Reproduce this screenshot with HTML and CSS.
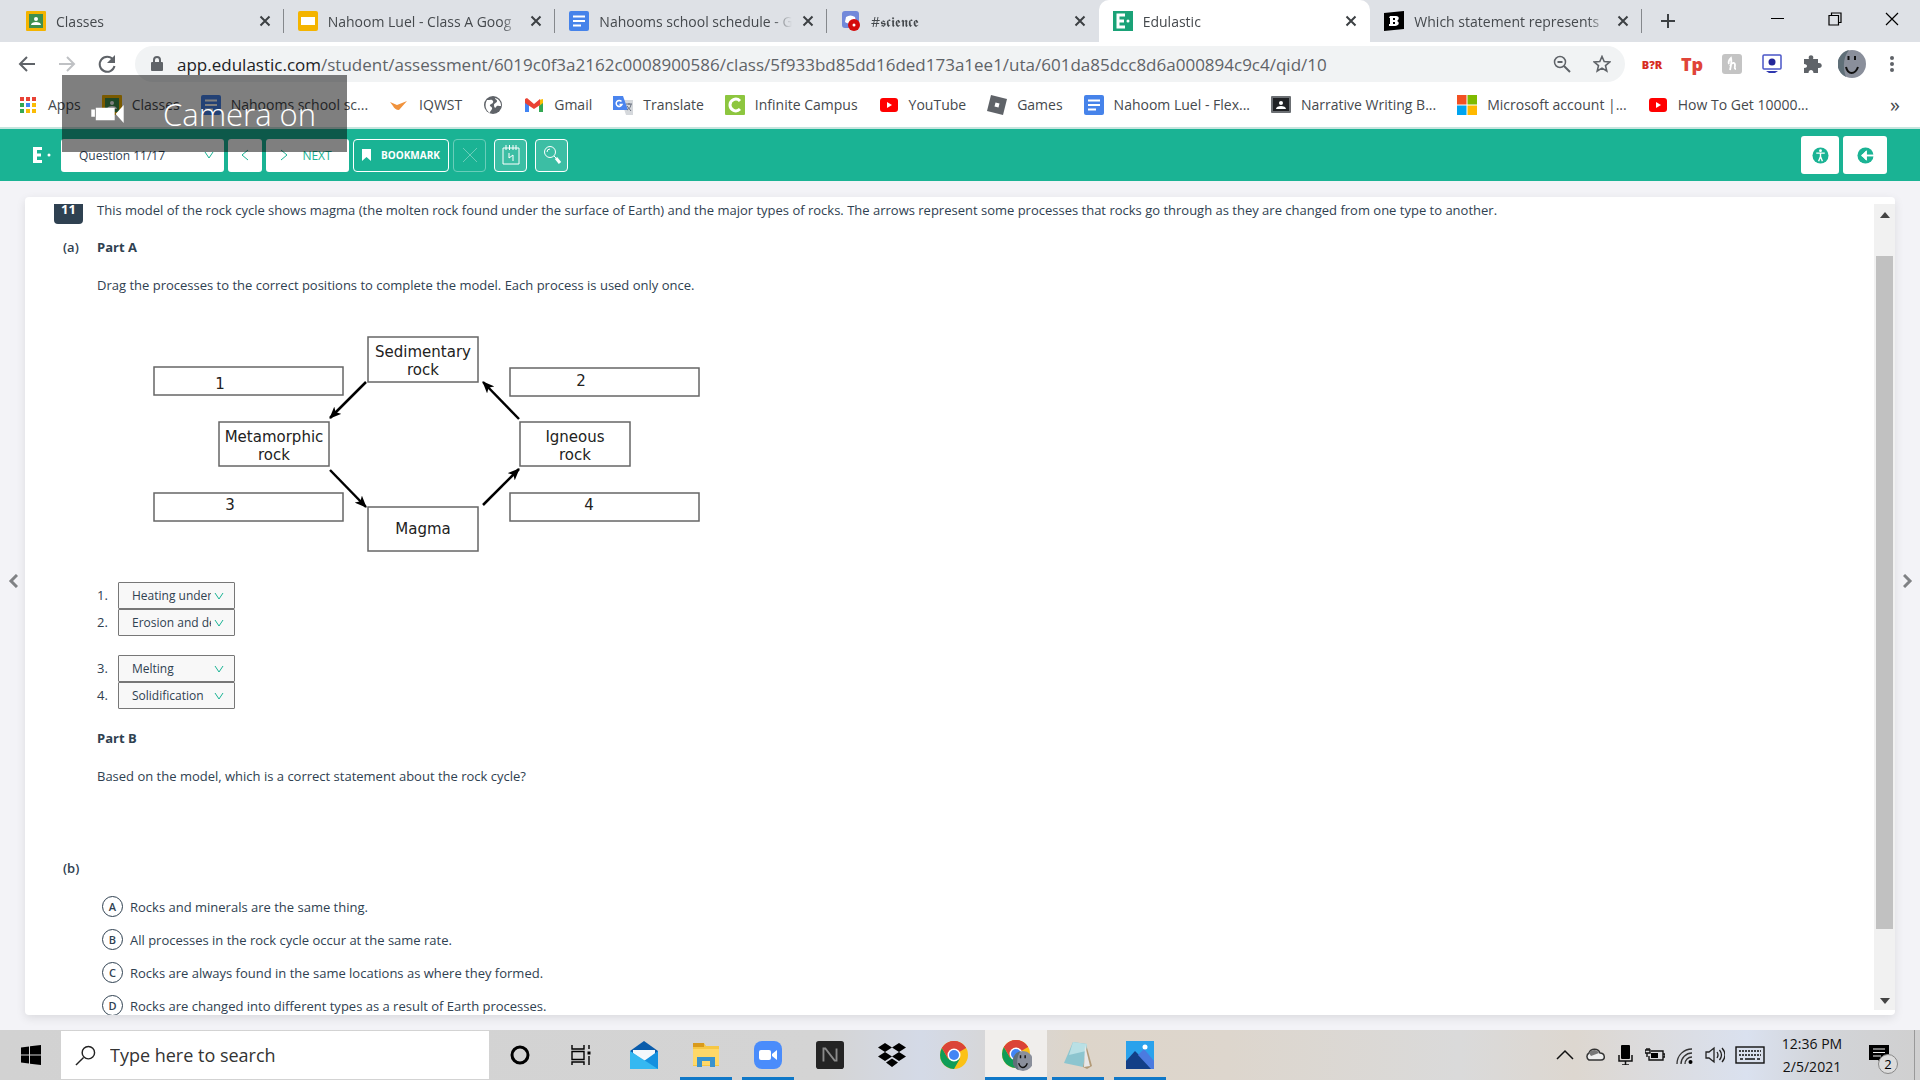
FILE: index.html
```html
<!DOCTYPE html>
<html lang="en">
<head>
  <meta charset="UTF-8" />
  <meta name="viewport" content="width=device-width, initial-scale=1" />
  <title>Edulastic</title>
  <link rel="stylesheet" href="styles.css">
</head>
<body>
  <!-- Shared icons -->
  <svg class="sprite" aria-hidden="true">
    <symbol id="i-class" viewBox="0 0 20 20"><rect width="20" height="20" rx="1" fill="#f4b400"/><rect x="3" y="3" width="14" height="14" fill="#3f8f4f"/><circle cx="10" cy="8" r="2" fill="#fff"/><path d="M5 14c0-4 10-4 10 0z" fill="#fff"/></symbol>
    <symbol id="i-doc" viewBox="0 0 20 20"><rect width="20" height="20" rx="2" fill="#4683ea"/><path d="M4 5.500h12M4 10h12M4 14.500h8" stroke="#fff" stroke-width="2"/></symbol>
    <symbol id="i-x" viewBox="0 0 12 12"><path d="M1.500 1.500l9 9M10.500 1.500l-9 9" stroke="#3c4043" stroke-width="2" fill="none"/></symbol>
    <symbol id="i-yt" viewBox="0 0 20 20"><rect x="1" y="3" width="18" height="14" rx="3" fill="#f00"/><path d="M8 7l5 3-5 3z" fill="#fff"/></symbol>
    <symbol id="i-chrome" viewBox="0 0 28 28"><circle cx="14" cy="14" r="14" fill="#fbc116"/><path d="M14 14L1.900 7A14 14 0 0 1 26.100 7z" fill="#db4437"/><path d="M1.900 7A14 14 0 0 0 14 28L20 17.500 8 17.500z" fill="#0f9d58"/><path d="M14 7h12.100A14 14 0 0 0 1.900 7L8 17.500z" fill="#db4437"/><circle cx="14" cy="14" r="6.500" fill="#fff"/><circle cx="14" cy="14" r="5" fill="#4285f4"/></symbol>
    <symbol id="i-face" viewBox="0 0 28 28"><circle cx="14" cy="14" r="14" fill="#8a8f9b"/><path d="M3 5a14 14 0 0 1 8-5C6 6 4 16 8 27A14 14 0 0 1 3 5z" fill="#5f6f78"/><path d="M10.500 6v4M17 6v4" stroke="#111" stroke-width="2"/><path d="M8 17c2 8 9 8 12 0" fill="none" stroke="#111" stroke-width="2"/></symbol>
  </svg>

  <div class="tabs">
    <div class="tab-list">
      <div class="tab">
        <svg class="fav"><use href="#i-class"/></svg>
        <span class="tab-title">Classes</span>
        <button class="tab-close" aria-label="Close"><svg><use href="#i-x"/></svg></button>
      </div>
      <div class="tab">
        <svg class="fav" viewBox="0 0 20 20"><rect width="20" height="20" rx="2" fill="#f4b400"/><rect x="3" y="6" width="14" height="8" fill="#fff"/></svg>
        <span class="tab-title">Nahoom Luel - Class A Goog</span>
        <button class="tab-close" aria-label="Close"><svg><use href="#i-x"/></svg></button>
      </div>
      <div class="tab">
        <svg class="fav"><use href="#i-doc"/></svg>
        <span class="tab-title">Nahooms school schedule - G</span>
        <button class="tab-close" aria-label="Close"><svg><use href="#i-x"/></svg></button>
      </div>
      <div class="tab no-line">
        <svg class="fav" viewBox="0 0 20 20"><rect x="1" width="17" height="17" rx="3" fill="#7289da"/><path d="M5 6c3-2 6-2 9 0l1 5c-3 2-8 2-11 0z" fill="#fff"/><circle cx="13" cy="14" r="6" fill="#d40b0b"/><circle cx="13" cy="14" r="1.500" fill="#fff"/></svg>
        <span class="tab-title">#𝖘𝖈𝖎𝖊𝖓𝖈𝖊</span>
        <button class="tab-close" aria-label="Close"><svg><use href="#i-x"/></svg></button>
      </div>
      <div class="tab active">
        <svg class="fav" viewBox="0 0 20 20"><rect width="20" height="20" fill="#1aa277"/><path d="M12 4H5v12h7M5 10h6" fill="none" stroke="#fff" stroke-width="3"/><circle cx="15" cy="10" r="1.500" fill="#fff"/></svg>
        <span class="tab-title">Edulastic</span>
        <button class="tab-close" aria-label="Close"><svg><use href="#i-x"/></svg></button>
      </div>
      <div class="tab">
        <svg class="fav" viewBox="0 0 20 20"><path d="M0 2L20 0v18L0 20z" fill="#000"/><path d="M6 5h6c4 0 3 4 1 5 3 1 2 5-2 5H5v-2h1V7H5z" fill="#fff"/><path d="M9 7h2v2H9zM9 11h2v2H9z" fill="#000"/></svg>
        <span class="tab-title">Which statement represents</span>
        <button class="tab-close" aria-label="Close"><svg><use href="#i-x"/></svg></button>
      </div>
    </div>
    <button class="new-tab" aria-label="New tab"><svg viewBox="0 0 16 16"><path d="M8 1v14M1 8h14" stroke="#3c4043" stroke-width="2"/></svg></button>
    <div class="window-buttons">
      <button aria-label="Minimize"><svg viewBox="0 0 14 14"><path d="M0 6.500h13" stroke="#000"/></svg></button>
      <button aria-label="Restore"><svg viewBox="0 0 14 14"><path d="M1 3.500h9.500V13H1zM3.500 3V1h9.500v9.500h-2" fill="none" stroke="#000" stroke-width="1.200"/></svg></button>
      <button aria-label="Close window"><svg viewBox="0 0 14 14"><path d="M1 1l12 12M13 1L1 13" stroke="#000" stroke-width="1.200"/></svg></button>
    </div>
  </div>

  <div class="toolbar">
    <button class="nav" aria-label="Back"><svg viewBox="0 0 20 20"><path d="M18 10H3M10 3l-7 7 7 7" fill="none" stroke="#5f6368" stroke-width="2"/></svg></button>
    <button class="nav" aria-label="Forward"><svg viewBox="0 0 20 20"><path d="M2 10h15M10 3l7 7-7 7" fill="none" stroke="#bfc1c4" stroke-width="2"/></svg></button>
    <button class="nav" aria-label="Reload"><svg viewBox="0 0 20 20"><path d="M16 5.500A7.500 7.500 0 1 0 17.500 12" fill="none" stroke="#5f6368" stroke-width="2"/><path d="M18 1v8h-8z" fill="#5f6368"/></svg></button>
    <div class="omnibox">
      <svg class="lock" viewBox="0 0 12 16"><rect y="6" width="12" height="9" rx="1" fill="#5f6368"/><path d="M3 7V4a3 3 0 0 1 6 0v3" fill="none" stroke="#5f6368" stroke-width="2"/></svg>
      <div class="url"><span>app.edulastic.com</span>/student/assessment/6019c0f3a2162c0008900586/class/5f933bd85dd16ded173a1ee1/uta/601da85dcc8d6a000894c9c4/qid/10</div>
      <button aria-label="Zoom"><svg viewBox="0 0 18 18"><circle cx="7" cy="7" r="5.500" fill="none" stroke="#5f6368" stroke-width="1.500"/><path d="M4.500 7h5M11 11l6 6" stroke="#5f6368" stroke-width="2"/></svg></button>
      <button aria-label="Bookmark this page"><svg viewBox="0 0 18 18"><path d="M9 1.500l2.200 5.100 5.500.4-4.200 3.600 1.300 5.400L9 13.100 4.200 16l1.300-5.400L1.300 7l5.500-.4z" fill="none" stroke="#5f6368" stroke-width="1.600"/></svg></button>
    </div>
    <div class="extensions">
      <button class="ext-bpr" aria-label="BPR">B?R</button>
      <button class="ext-tp" aria-label="TP">Tp</button>
      <button aria-label="Honey"><svg viewBox="0 0 20 20"><rect width="20" height="20" rx="3" fill="#c4c4c4"/><path d="M8 16c1-4 2-8 1-12-2 2-3 4-2 6M8 12c2-4 5-4 5-1 0 2-1 4 1 4" fill="none" stroke="#fff" stroke-width="1.800"/></svg></button>
      <button aria-label="Screen"><svg viewBox="0 0 20 20"><rect x="1" y="1" width="18" height="14" rx="1" fill="#fff" stroke="#4a55c8" stroke-width="1.500"/><circle cx="10" cy="8" r="3.500" fill="#23269a"/><path d="M4 17h12l-3 2H7z" fill="#3039b0"/></svg></button>
      <button aria-label="Extensions"><svg viewBox="0 0 20 20"><path d="M2 5h5C5 0 13 0 11 5h5v4c5-1 5 6 0 5v5h-4.500c0-4-5-4-5 0H2v-5c4 0 4-4 0-4z" fill="#5f6368"/></svg></button>
      <button class="avatar" aria-label="Profile"><svg><use href="#i-face"/></svg></button>
      <button class="menu" aria-label="Menu"><svg viewBox="0 0 6 18"><circle cx="3" cy="3" r="2"/><circle cx="3" cy="9" r="2"/><circle cx="3" cy="15" r="2"/></svg></button>
    </div>
  </div>

  <div class="bookmarks">
    <a href="#"><svg viewBox="0 0 20 20"><path d="M2 2h4v4H2zM8 2h4v4H8z" fill="#e94235"/><path d="M14 2h4v4h-4z" fill="#e94235"/><path d="M2 8h4v4H2z" fill="#34a853"/><path d="M8 8h4v4H8z" fill="#4285f4"/><path d="M14 8h4v4h-4z" fill="#fbbc05"/><path d="M2 14h4v4H2z" fill="#34a853"/><path d="M8 14h4v4H8zM14 14h4v4h-4z" fill="#fbbc05"/></svg>Apps</a>
    <a href="#"><svg><use href="#i-class"/></svg>Classes</a>
    <a href="#"><svg><use href="#i-doc"/></svg>Nahooms school sc...</a>
    <a href="#"><svg viewBox="0 0 20 20"><path d="M1 7l7 3 10-4-8 9c-3 0-5-2-6-4z" fill="#f0923c"/></svg>IQWST</a>
    <a href="#" aria-label="Website"><svg viewBox="0 0 20 20"><circle cx="10" cy="10" r="9" fill="#5f6368"/><path d="M4 5c3 0 5-1 6 1s-2 3-3 4 3 2 2 4-2 2-2 4c-4-2-6-8-3-13zM12 3c4 1 6 4 6 8-2 0-4-1-5 1s-2 0-2-2 3-2 3-4-2-1-2-3z" fill="#fff"/></svg></a>
    <a href="#"><svg viewBox="0 0 20 20"><path d="M1 5v12h4V9z" fill="#4285f4"/><path d="M19 5v12h-4V9z" fill="#34a853"/><path d="M15 5l4-1v4l-4 3z" fill="#fbbc05"/><path d="M1 4l2-1 7 6 6-5v6l-6 4-9-6z" fill="#ea4335"/></svg>Gmail</a>
    <a href="#"><svg viewBox="0 0 20 20"><path d="M8 5h12v15h-7z" fill="#d5d8dc"/><path d="M0 1h10l5 14H0z" fill="#4a84ee"/><path d="M8.500 6.500a3 3 0 1 0 .5 3H6.500" fill="none" stroke="#fff" stroke-width="1.500"/><path d="M13 9h6M16 8v2M18 9c0 3-2 5-4 6M14 11l4 5" fill="none" stroke="#6b7280"/></svg>Translate</a>
    <a href="#"><svg viewBox="0 0 20 20"><rect width="20" height="20" rx="1" fill="#8dc63f"/><path d="M15 6c-4-4-10-1-10 4s6 8 10 4" fill="none" stroke="#fff" stroke-width="3"/></svg>Infinite Campus</a>
    <a href="#"><svg><use href="#i-yt"/></svg>YouTube</a>
    <a href="#"><svg viewBox="0 0 20 20"><path d="M4 0l16 4-4 16-16-4z" fill="#5f6368"/><path d="M8.500 7.500l4 1-1 4-4-1z" fill="#fff"/></svg>Games</a>
    <a href="#"><svg><use href="#i-doc"/></svg>Nahoom Luel - Flex...</a>
    <a href="#"><svg viewBox="0 0 20 20"><rect y="1" width="20" height="17" rx="1" fill="#6b6f73"/><rect x="2" y="3" width="16" height="13" fill="#1f2124"/><circle cx="10" cy="8" r="2" fill="#fff"/><path d="M5 14c0-4 10-4 10 0z" fill="#fff"/></svg>Narrative Writing B...</a>
    <a href="#"><svg viewBox="0 0 20 20"><path d="M0 0h9.500v9.500H0z" fill="#f25022"/><path d="M10.500 0H20v9.500h-9.500z" fill="#7fba00"/><path d="M0 10.500h9.500V20H0z" fill="#00a4ef"/><path d="M10.500 10.500H20V20h-9.500z" fill="#ffb900"/></svg>Microsoft account |...</a>
    <a href="#"><svg><use href="#i-yt"/></svg>How To Get 10000...</a>
    <button class="more" aria-label="More bookmarks">»</button>
  </div>

  <header class="app-bar">
    <svg class="logo" viewBox="0 0 20 16" aria-label="Edulastic"><path d="M10 1.500H3v13h7M3 8h6" fill="none" stroke="#fff" stroke-width="3"/><path d="M1 0h4v16H1z" fill="#fff"/><circle cx="17" cy="8" r="1.500" fill="#fff"/></svg>
    <select class="question-select" aria-label="Question"><option>Question 11/17</option></select>
    <button class="btn-white prev" aria-label="Previous"><svg viewBox="0 0 8 12"><path d="M7 1L1 6l6 5"/></svg></button>
    <button class="btn-white next"><svg viewBox="0 0 8 12"><path d="M1 1l6 5-6 5"/></svg>NEXT</button>
    <button class="btn-line bookmark"><svg viewBox="0 0 9 12"><path d="M0 0h9v12L4.500 8 0 12z" fill="#fff"/></svg>BOOKMARK</button>
    <button class="btn-line faded" aria-label="Cross out"><svg viewBox="0 0 16 16"><path d="M1 1l14 14M15 1L1 15"/></svg></button>
    <button class="btn-line tool" aria-label="Scratchpad"><svg viewBox="0 0 20 20"><path d="M2 3h16v16H2zM5 0v5M8.500 0v5M12 0v5M15 0v5M8 8v5l4-3v6"/></svg></button>
    <button class="btn-line tool" aria-label="Magnify"><svg viewBox="0 0 20 20"><circle cx="8" cy="7" r="5.500"/><path d="M5 7a3 3 0 0 1 3-3M12 11l6 6"/><path d="M14 13l4 5" stroke-width="3"/></svg></button>
    <button class="btn-white access" aria-label="Accessibility"><svg viewBox="0 0 18 18"><circle cx="9" cy="9" r="8.500" fill="#1ab394"/><circle cx="9" cy="4" r="1.500" fill="#fff"/><path d="M4.500 6.500h9M9 7v4M9 10l-2 5M9 10l2 5" fill="none" stroke="#fff" stroke-width="1.500"/></svg></button>
    <button class="btn-white exit" aria-label="Exit"><svg viewBox="0 0 18 18"><circle cx="9" cy="9" r="8.500" fill="#1ab394"/><path d="M5 9h13" stroke="#fff" stroke-width="2"/><path d="M10 4L5 9l5 5z" fill="#fff"/></svg></button>
  </header>

  <main class="page">
    <button class="side" aria-label="Previous question"><svg viewBox="0 0 10 14"><path d="M9 1L3 7l6 6"/></svg></button>
    <div class="card">
      <div class="question">
        <div class="row lead">
          <span class="number">11</span>
          <p>This model of the rock cycle shows magma (the molten rock found under the surface of Earth) and the major types of rocks. The arrows represent some processes that rocks go through as they are changed from one type to another.</p>
        </div>
        <div class="row">
          <span class="part">(a)</span>
          <div class="part-body">
            <h2>Part A</h2>
            <p>Drag the processes to the correct positions to complete the model. Each process is used only once.</p>
            <svg class="cycle" viewBox="0 0 560 230">
              <defs><marker id="tip" viewBox="0 0 12 10" refX="11" refY="5" markerWidth="12" markerHeight="10" markerUnits="userSpaceOnUse" orient="auto"><path d="M0 0l12 5-12 5 3-5z"/></marker></defs>
              <g fill="none" stroke="#666" stroke-width="1.500">
                <rect x="271" y="7" width="110" height="45"/>
                <rect x="122" y="92" width="110" height="44"/>
                <rect x="423" y="92" width="110" height="44"/>
                <rect x="271" y="177" width="110" height="44"/>
                <rect x="57" y="37" width="189" height="28"/>
                <rect x="413" y="38" width="189" height="28"/>
                <rect x="57" y="163" width="189" height="28"/>
                <rect x="413" y="163" width="189" height="28"/>
              </g>
              <g stroke="#000" stroke-width="2.500">
                <path d="M269 52l-36 36" marker-end="url(#tip)"/>
                <path d="M422 89l-36-37" marker-end="url(#tip)"/>
                <path d="M233 140l36 37" marker-end="url(#tip)"/>
                <path d="M386 175l36-36" marker-end="url(#tip)"/>
              </g>
              <g class="cycle-text">
                <text x="326" y="27">Sedimentary</text><text x="326" y="45">rock</text>
                <text x="177" y="112">Metamorphic</text><text x="177" y="130">rock</text>
                <text x="478" y="112">Igneous</text><text x="478" y="130">rock</text>
                <text x="326" y="204">Magma</text>
                <text x="123" y="59">1</text><text x="484" y="56">2</text>
                <text x="133" y="180">3</text><text x="492" y="180">4</text>
              </g>
            </svg>
            <div class="answers">
              <div class="answer"><label for="a1">1.</label><select id="a1"><option>Heating under pressure</option></select></div>
              <div class="answer"><label for="a2">2.</label><select id="a2"><option>Erosion and deposition</option></select></div>
            </div>
            <div class="answers">
              <div class="answer"><label for="a3">3.</label><select id="a3"><option>Melting</option></select></div>
              <div class="answer"><label for="a4">4.</label><select id="a4"><option>Solidification</option></select></div>
            </div>
            <h2>Part B</h2>
            <p>Based on the model, which is a correct statement about the rock cycle?</p>
          </div>
        </div>
        <div class="row choices-row">
          <span class="part">(b)</span>
          <div class="choices">
            <label><input type="radio" name="choice"><span class="letter">A</span>Rocks and minerals are the same thing.</label>
            <label><input type="radio" name="choice"><span class="letter">B</span>All processes in the rock cycle occur at the same rate.</label>
            <label><input type="radio" name="choice"><span class="letter">C</span>Rocks are always found in the same locations as where they formed.</label>
            <label><input type="radio" name="choice"><span class="letter">D</span>Rocks are changed into different types as a result of Earth processes.</label>
          </div>
        </div>
      </div>
      <div class="scrollbar">
        <svg viewBox="0 0 10 6"><path d="M0 6l5-6 5 6z"/></svg>
        <div class="thumb"></div>
        <svg viewBox="0 0 10 6"><path d="M0 0l5 6 5-6z"/></svg>
      </div>
    </div>
    <button class="side" aria-label="Next question"><svg viewBox="0 0 10 14"><path d="M1 1l6 6-6 6"/></svg></button>
  </main>

  <footer class="taskbar">
    <button class="start" aria-label="Start"><svg viewBox="0 0 20 20"><path d="M0 2.500l8-1v8H0zM9 1.300L20 0v9.500H9zM0 10.500h8v8l-8-1zM9 10.500h11V20L9 18.700z"/></svg></button>
    <label class="search">
      <svg viewBox="0 0 22 22"><circle cx="14" cy="8" r="6.500" fill="none" stroke="#222" stroke-width="1.500"/><path d="M9 13l-8 8" stroke="#222" stroke-width="1.500"/></svg>
      <input type="text" placeholder="Type here to search" aria-label="Search">
    </label>
    <div class="apps">
      <button class="app" aria-label="Cortana"><svg viewBox="0 0 28 28"><circle cx="14" cy="14" r="8" fill="none" stroke="#000" stroke-width="3"/></svg></button>
      <button class="app" aria-label="Task view"><svg viewBox="0 0 28 28"><path d="M4 4v4h12V4M4 10.500h12v8H4zM4 24v-3h12v3M21 4v4M21 15v9" fill="none" stroke="#000" stroke-width="1.400"/><path d="M19.500 10.500h3v3h-3z"/></svg></button>
      <button class="app" aria-label="Mail"><svg viewBox="0 0 28 28"><path d="M0 10L14 0l14 10v5H0z" fill="#0a5cab"/><path d="M3 9h22v10H3z" fill="#f4f7fb"/><path d="M0 10l14 10 14-10v18H0z" fill="#1490df"/><path d="M0 10l28 18H0z" fill="#35b8f1"/></svg></button>
      <button class="app open" aria-label="File Explorer"><svg viewBox="0 0 28 28"><path d="M1 2h11l2 3h13v20H1z" fill="#f6c744"/><path d="M1 2h11v4H1z" fill="#d99a1c"/><path d="M1 8h26v16H1z" fill="#ffd868"/><path d="M5 16h18v10h-5v-6h-8v6H5z" fill="#3a93cd"/></svg></button>
      <button class="app open" aria-label="Zoom"><svg viewBox="0 0 28 28"><rect width="28" height="28" rx="8" fill="#4a8cfb"/><rect x="5" y="9" width="12" height="10" rx="2" fill="#fff"/><path d="M18 13l5-4v10l-5-4z" fill="#fff"/></svg></button>
      <button class="app" aria-label="N"><svg viewBox="0 0 30 30"><rect width="30" height="30" rx="3" fill="#242424"/><path d="M8 22V8h2l10 13h2V8" fill="none" stroke="#8a8a8a" stroke-width="2"/></svg></button>
      <button class="app" aria-label="Dropbox"><svg viewBox="0 0 28 28"><path d="M7 2l7 4.500L7 11 0 6.500zM21 2l7 4.500-7 4.500-7-4.500zM7 11l7 4.500L7 20l-7-4.500zM21 11l7 4.500-7 4.500-7-4.500zM14 17.500l6 4-6 4.500-6-4.500z"/></svg></button>
      <button class="app" aria-label="Chrome"><svg><use href="#i-chrome"/></svg></button>
      <button class="app open current" aria-label="Chrome profile"><svg viewBox="0 0 32 32"><use href="#i-chrome" x="2" y="1" width="28" height="28"/><use href="#i-face" x="13" y="12" width="20" height="20"/></svg></button>
      <button class="app open" aria-label="Notepad"><svg viewBox="0 0 28 28"><path d="M22 3l6 22-5 3-4-2z" fill="#b39b78"/><path d="M9 1l14 2-4 23L0 22z" fill="#8cc5cf"/><path d="M9 1l14 2-1 7L5 14z" fill="#b9e0e5"/><path d="M21 4l5 21-6 1z" fill="#e8e8e8"/></svg></button>
      <button class="app open" aria-label="Photos"><svg viewBox="0 0 28 28"><rect width="28" height="28" fill="#2aa2ec"/><path d="M0 20L9 10l18 18H0z" fill="#123f87"/><path d="M12 14l6-6 10 12v8h-3z" fill="#4b7be0"/><circle cx="19" cy="6" r="2.500" fill="#fff"/></svg></button>
    </div>
    <div class="tray">
      <svg viewBox="0 0 20 20"><path d="M2 14l8-8 8 8" fill="none" stroke="#111" stroke-width="1.500"/></svg>
      <svg viewBox="0 0 20 20"><path d="M4 15a4 4 0 0 1 0-7c2-5 9-5 11 0 5 0 6 7 1 7z" fill="#eee" stroke="#333" stroke-width="1.500"/><path d="M4 8c3-4 8-4 10 0l-8 3z" fill="#777"/></svg>
      <svg viewBox="0 0 20 20"><rect x="6" y="0" width="9" height="14" rx="1"/><path d="M4 10v6h13v-6M10.500 16v4M7 20h7" fill="none" stroke="#111" stroke-width="1.500"/></svg>
      <svg viewBox="0 0 20 20"><path d="M6 6h12v9H4v-4M18 9h2v3h-2M0 5h5v3H0zM2 3v2M4 3v2M2 8v4" fill="none" stroke="#111" stroke-width="1.400"/><path d="M6 8h7v5H6z"/></svg>
      <svg viewBox="0 0 20 20"><path d="M2 19C2 10 9 4 17 4M6 19c0-6 5-11 11-11M10 19c0-4 3-7 7-7" fill="none" stroke="#333" stroke-width="1.300"/><circle cx="15.500" cy="17" r="2"/></svg>
      <svg viewBox="0 0 20 20"><path d="M1 7h3l5-4v14l-5-4H1zM12 7q2 3 0 6M14.500 5q4 5 0 10M17 3q6 7 0 14" fill="none" stroke="#222" stroke-width="1.300"/></svg>
      <svg class="keyboard" viewBox="0 0 30 18"><rect x="1" y="1" width="28" height="16" fill="none" stroke="#111" stroke-width="1.400"/><path d="M4 5h22M4 9h22" stroke="#111" stroke-width="1.500" stroke-dasharray="2 1"/><path d="M5 13h3M10 13h10M22 13h3" stroke="#111" stroke-width="1.500"/></svg>
      <div class="clock"><span>12:36 PM</span><span>2/5/2021</span></div>
      <button class="notice" aria-label="Notifications"><svg viewBox="0 0 20 20"><path d="M0 0h20v15h-6v5l-5-5H0z"/><path d="M4 4h12M4 7.500h12M4 11h8" stroke="#eee" stroke-width="1.200"/></svg><span class="count">2</span></button>
    </div>
  </footer>

  <!-- Meeting toast over the browser window -->
  <div class="toast">
    <svg viewBox="0 0 36 20"><path d="M0 5h4v8H0zM5 3h21v14H5zM27 10l9-10v20z" fill="#fff"/></svg>
    Camera on
  </div>
</body>
</html>
```

FILE: styles.css
```css
* {
  box-sizing: border-box;
}
body, html {
  margin: 0;
  padding: 0;
  height: 100%;
}
body {
  display: flex;
  flex-direction: column;
  overflow: hidden;
  background: #f3f3f7;
  font-family: "Open Sans", "Noto Sans", sans-serif;
  font-size: 14px;
  color: #2f4151;
}
button {
  display: flex;
  align-items: center;
  justify-content: center;
  margin: 0;
  padding: 0;
  border: none;
  background: none;
  font-family: inherit;
  cursor: pointer;
}
.sprite {
  position: absolute;
  width: 0;
  height: 0;
}

/* Tab strip */
.tabs {
  display: flex;
  flex: none;
  height: 42px;
  padding-left: 12px;
  background: #dee1e6;
}
.tab-list {
  display: flex;
  flex: 0 1 1630px;
}
.tab {
  display: flex;
  flex: 1 1 0;
  align-items: center;
  min-width: 0;
  padding: 0 13px 0 14px;
  background: linear-gradient(#85888c, #85888c) right center / 1px 24px no-repeat;
  color: #45494d;
}
.tab.no-line {
  background: none;
}
.tab.active {
  background: #fff;
  border-radius: 10px 10px 0 0;
}
.fav {
  flex: none;
  width: 20px;
  height: 20px;
}
.tab-title {
  flex: 1;
  margin: 0 10px;
  overflow: hidden;
  white-space: nowrap;
  -webkit-mask-image: linear-gradient(90deg, #000 90%, transparent);
  mask-image: linear-gradient(90deg, #000 90%, transparent);
}
.tab-close svg {
  width: 12px;
  height: 12px;
}
.new-tab {
  width: 52px;
}
.new-tab svg {
  width: 16px;
  height: 16px;
}
.window-buttons {
  display: flex;
  height: 38px;
  margin-left: auto;
}
.window-buttons button {
  width: 57px;
}
.window-buttons svg {
  width: 14px;
  height: 14px;
}

/* Toolbar */
.toolbar {
  display: flex;
  flex: none;
  align-items: center;
  height: 44px;
  padding-left: 7px;
  background: #fff;
}
.nav {
  width: 40px;
}
.nav svg {
  width: 20px;
  height: 20px;
}
.omnibox {
  display: flex;
  flex: 1;
  align-items: center;
  gap: 22px;
  height: 36px;
  margin-left: 8px;
  padding: 0 14px 0 16px;
  border-radius: 18px;
  background: #f1f3f4;
}
.omnibox .lock {
  width: 12px;
  height: 16px;
  margin-right: -8px;
}
.omnibox button svg {
  width: 18px;
  height: 18px;
}
.url {
  flex: 1;
  overflow: hidden;
  white-space: nowrap;
  font-size: 17px;
  color: #5f6368;
}
.url span {
  color: #202124;
}
.extensions {
  display: flex;
  align-items: center;
  padding: 0 8px 0 7px;
}
.extensions button {
  width: 40px;
}
.extensions svg {
  width: 20px;
  height: 20px;
}
.extensions .avatar svg {
  width: 28px;
  height: 28px;
}
.extensions .menu svg {
  width: 6px;
  height: 18px;
  fill: #5f6368;
}
.extensions .ext-bpr {
  font-size: 11px;
  font-weight: 800;
  color: #d62a20;
}
.extensions .ext-tp {
  font-size: 18px;
  font-weight: 800;
  color: #e04438;
}

/* Bookmarks bar */
.bookmarks {
  display: flex;
  flex: none;
  align-items: center;
  gap: 21px;
  height: 43px;
  padding: 0 20px 4px 18px;
  border-bottom: 2px solid #c5e5de;
  background: #fff;
}
.bookmarks a {
  display: flex;
  align-items: center;
  gap: 10px;
  white-space: nowrap;
  text-decoration: none;
  color: #45494d;
}
.bookmarks svg {
  width: 20px;
  height: 20px;
}
.more {
  margin-left: auto;
  font-size: 20px;
  color: #45494d;
}

/* Assessment header */
.app-bar {
  display: flex;
  flex: none;
  align-items: center;
  gap: 4px;
  height: 52px;
  padding: 0 33px 0 32px;
  background: #1ab394;
}
.logo {
  width: 20px;
  height: 16px;
  margin-right: 5px;
}
.question-select {
  width: 163px;
  height: 33px;
  padding: 0 18px;
  border: none;
  border-radius: 3px;
  appearance: none;
  background: #fff url("data:image/svg+xml,%3Csvg xmlns='http://www.w3.org/2000/svg' viewBox='0 0 10 8'%3E%3Cpath d='M1 1l4 6 4-6' fill='none' stroke='%231ab394'/%3E%3C/svg%3E") right 10px center / 10px 8px no-repeat;
  font-family: inherit;
  font-size: 12px;
  color: #2f4151;
}
.btn-white {
  height: 33px;
  border-radius: 3px;
  background: #fff;
  font-size: 12px;
  color: #1ab394;
}
.btn-white path {
  fill: none;
  stroke: #1ab394;
}
.prev {
  width: 34px;
}
.next {
  gap: 14px;
  width: 83px;
  padding-right: 3px;
}
.prev svg,
.next svg {
  width: 8px;
  height: 12px;
}
.btn-line {
  width: 33px;
  height: 33px;
  border: 1px solid #fff;
  border-radius: 4px;
  font-size: 10px;
  font-weight: 700;
  color: #fff;
}
.btn-line.bookmark {
  gap: 10px;
  width: 96px;
}
.bookmark svg {
  width: 9px;
  height: 12px;
}
.btn-line.faded {
  opacity: 0.35;
}
.faded svg {
  width: 16px;
  height: 16px;
  stroke: #fff;
}
.tool {
  margin-left: 4px;
  background: rgba(255, 255, 255, 0.15);
}
.tool svg {
  width: 20px;
  height: 20px;
  fill: none;
  stroke: #fff;
}
.access,
.exit {
  height: 38px;
}
.access {
  width: 38px;
  margin-left: auto;
}
.exit {
  width: 44px;
}
.access svg,
.exit svg {
  width: 17px;
  height: 17px;
}
.access path,
.exit path {
  stroke: #fff;
}
.exit path:last-child {
  fill: #fff;
}

/* Question card */
.page {
  display: flex;
  flex: 1;
  min-height: 0;
  padding: 16px 0 15px;
}
.side {
  flex: none;
  width: 25px;
  padding-bottom: 50px;
}
.side svg {
  width: 10px;
  height: 14px;
  fill: none;
  stroke: #808285;
  stroke-width: 3;
}
.card {
  display: flex;
  flex: 1;
  min-width: 0;
  padding-top: 7px;
  border-radius: 4px;
  background: #fff;
  box-shadow: 0 3px 10px rgba(0, 0, 0, 0.1);
}
.question {
  flex: 1;
  overflow: hidden;
  padding: 0 29px;
  font-size: 13px;
}
.row {
  display: flex;
}
.question p,
.question h2 {
  margin: 0;
  font-size: 13px;
  line-height: 20px;
}
.lead {
  align-items: flex-start;
  height: 28px;
}
.number {
  display: flex;
  align-items: flex-start;
  justify-content: center;
  width: 29px;
  height: 20px;
  margin-right: 14px;
  border-radius: 0 0 4px 4px;
  background: #2f4151;
  font-weight: 700;
  line-height: 11px;
  color: #fff;
}
.question .lead p {
  line-height: 12px;
}
.part {
  width: 43px;
  padding-left: 9px;
  font-weight: 600;
  line-height: 30px;
}
.part-body {
  padding-top: 5px;
}
.question .part-body p {
  margin: 18px 0;
}
.cycle {
  display: block;
  width: 560px;
  height: 230px;
  margin: 35px 0 22px;
  overflow: visible;
}
.cycle-text {
  font-family: "DejaVu Sans", sans-serif;
  font-size: 15px;
  text-anchor: middle;
  fill: #222;
}
.answers {
  margin-bottom: 19px;
}
.answer {
  display: flex;
  height: 27px;
}
.answer label {
  width: 21px;
  line-height: 26px;
}
.answer select {
  width: 117px;
  height: 27px;
  padding: 0 23px 0 13px;
  border: 1px solid #777;
  border-radius: 1px;
  appearance: none;
  background: #f8f8f8 url("data:image/svg+xml,%3Csvg xmlns='http://www.w3.org/2000/svg' viewBox='0 0 10 8'%3E%3Cpath d='M1 1l4 6 4-6' fill='none' stroke='%231ab394'/%3E%3C/svg%3E") right 10px center / 10px 8px no-repeat;
  font-family: inherit;
  font-size: 12px;
  color: #2f4151;
  text-overflow: clip;
}
.choices-row {
  margin-top: 49px;
}
.choices {
  padding: 37px 0 0 5px;
}
.choices label {
  display: flex;
  align-items: center;
  height: 33px;
}
.choices input {
  position: absolute;
  opacity: 0;
}
.letter {
  display: flex;
  align-items: center;
  justify-content: center;
  width: 21px;
  height: 21px;
  margin-right: 7px;
  border: 1px solid #2f4151;
  border-radius: 50%;
  font-size: 11px;
  font-weight: 600;
}
.scrollbar {
  display: flex;
  flex-direction: column;
  align-items: center;
  width: 21px;
  margin-bottom: 5px;
  padding: 8px 0 6px;
  background: #f1f1f1;
}
.scrollbar svg {
  flex: none;
  width: 10px;
  height: 6px;
  fill: #444;
}
.thumb {
  width: 17px;
  height: 85%;
  margin: 38px 0 auto;
  background: #c1c1c1;
}

/* Taskbar */
.taskbar {
  display: flex;
  flex: none;
  height: 50px;
  background: linear-gradient(90deg, #d2d2d2 0%, #d4d4d4 43%, #d4dae7 48%, #d6d7da 51%, #ddd5ca 56%, #ddd6cd 64%, #dadada 76%, #ddd7d0 82%, #dae1ef 91%, #d2d4d8 95%, #d0d0d0 100%);
}
.start {
  width: 61px;
}
.start svg {
  width: 20px;
  height: 20px;
}
.search {
  display: flex;
  flex: 0 1 428px;
  align-items: center;
  gap: 14px;
  margin: 1px 0;
  padding-left: 14px;
  background: #fff;
}
.search svg {
  width: 21px;
  height: 21px;
}
.search input {
  flex: 1;
  min-width: 0;
  padding: 0;
  border: none;
  outline: none;
  font-family: inherit;
  font-size: 18px;
}
.search input::placeholder {
  color: #333;
}
.apps {
  display: flex;
}
.app {
  width: 62px;
  border: solid transparent;
  border-width: 0 5px;
}
.app svg {
  width: 28px;
  height: 28px;
}
.app.open {
  background: linear-gradient(#0f78c8, #0f78c8) center bottom / 100% 3px no-repeat content-box;
}
.app.current {
  border-width: 0;
  background-color: #f0eeec;
  background-clip: border-box;
}
.app.current svg {
  width: 32px;
  height: 32px;
}
.tray {
  display: flex;
  align-items: center;
  gap: 10px;
  margin: 0 5px 0 auto;
  border-right: 1px solid #999;
}
.tray svg {
  width: 20px;
  height: 20px;
}
.tray .keyboard {
  width: 30px;
  height: 18px;
}
.clock {
  display: flex;
  flex-direction: column;
  align-items: center;
  width: 74px;
  line-height: 23px;
  color: #111;
}
.notice {
  position: relative;
  width: 40px;
  height: 50px;
  margin-right: 15px;
}
.count {
  position: absolute;
  left: 19px;
  bottom: 6px;
  width: 20px;
  height: 20px;
  border: 1px solid #888;
  border-radius: 50%;
  background: #dcdcdc;
  font-size: 13px;
  line-height: 18px;
}

/* Toast */
.toast {
  position: absolute;
  top: 75px;
  left: 62px;
  display: flex;
  align-items: center;
  gap: 37px;
  width: 285px;
  height: 77px;
  padding-left: 27px;
  background: rgba(0, 0, 0, 0.5);
  font-size: 31px;
  font-weight: 300;
  color: #fff;
}
.toast svg {
  width: 37px;
  height: 18px;
}
```
